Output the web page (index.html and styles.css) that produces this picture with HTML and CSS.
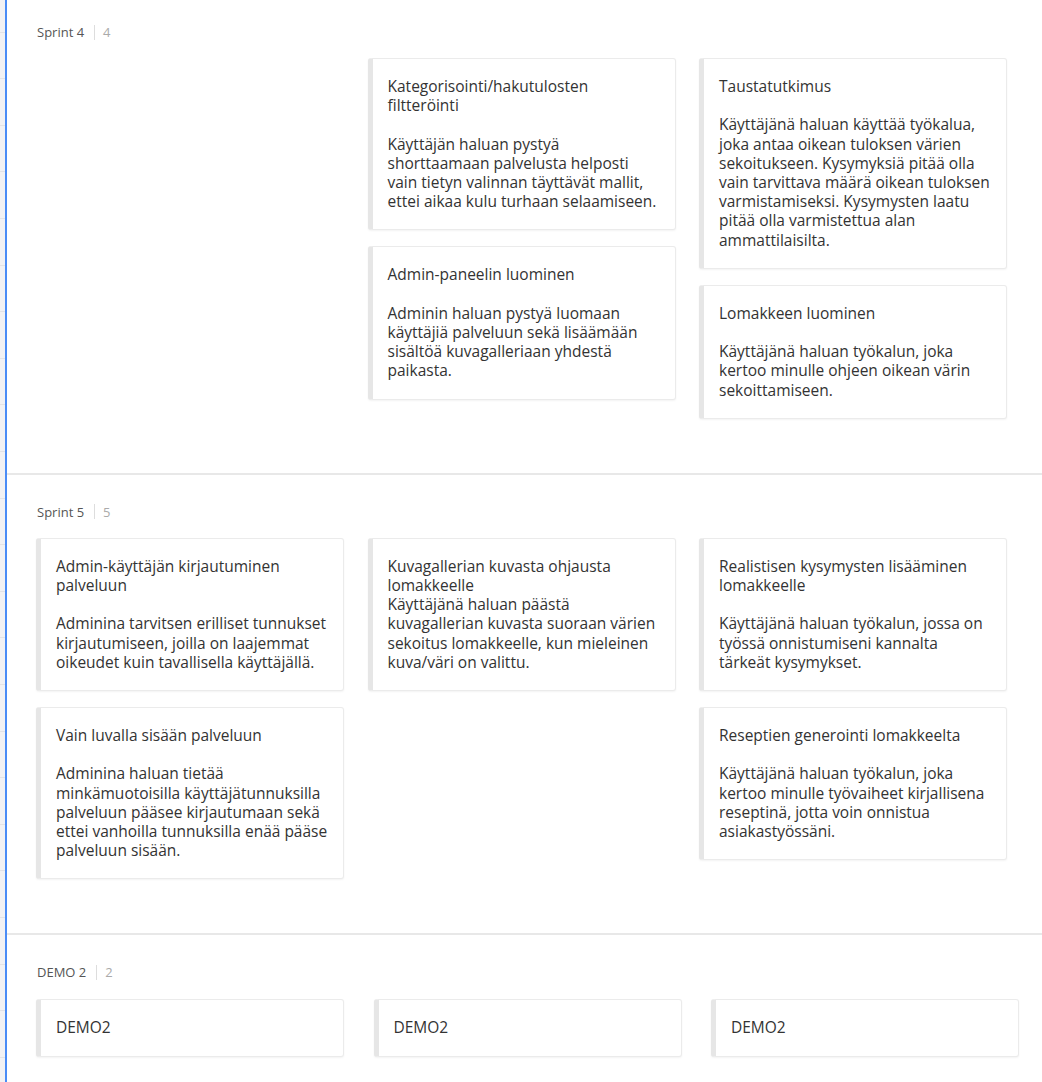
FILE: index.html
```html
<!DOCTYPE html>
<html lang="fi">
<head>
<meta charset="utf-8">
<title>Sprints</title>
<link rel="stylesheet" href="styles.css">
</head>
<body>
<div class="app">
  <div class="rail"></div>
  <main class="board">
    <section class="lane lane--first">
      <header class="lane-head"><span class="lane-name">Sprint 4</span><span class="lane-sep"></span><span class="lane-count">4</span></header>
      <div class="cols">
        <div class="col"></div>
        <div class="col">
          <div class="card">
            <p class="card-title">Kategorisointi/hakutulosten filtteröinti</p>
            <p class="card-desc">Käyttäjän haluan pystyä shorttaamaan palvelusta helposti vain tietyn valinnan täyttävät mallit, ettei aikaa kulu turhaan selaamiseen.</p>
          </div>
          <div class="card">
            <p class="card-title">Admin-paneelin luominen</p>
            <p class="card-desc">Adminin haluan pystyä luomaan käyttäjiä palveluun sekä lisäämään sisältöä kuvagalleriaan yhdestä paikasta.</p>
          </div>
        </div>
        <div class="col">
          <div class="card">
            <p class="card-title">Taustatutkimus</p>
            <p class="card-desc">Käyttäjänä haluan käyttää työkalua, joka antaa oikean tuloksen värien sekoitukseen. Kysymyksiä pitää olla vain tarvittava määrä oikean tuloksen varmistamiseksi. Kysymysten laatu pitää olla varmistettua alan ammattilaisilta.</p>
          </div>
          <div class="card">
            <p class="card-title">Lomakkeen luominen</p>
            <p class="card-desc">Käyttäjänä haluan työkalun, joka kertoo minulle ohjeen oikean värin sekoittamiseen.</p>
          </div>
        </div>
      </div>
    </section>

    <section class="lane">
      <header class="lane-head"><span class="lane-name">Sprint 5</span><span class="lane-sep"></span><span class="lane-count">5</span></header>
      <div class="cols">
        <div class="col">
          <div class="card">
            <p class="card-title">Admin-käyttäjän kirjautuminen palveluun</p>
            <p class="card-desc">Adminina tarvitsen erilliset tunnukset kirjautumiseen, joilla on laajemmat oikeudet kuin tavallisella käyttäjällä.</p>
          </div>
          <div class="card">
            <p class="card-title">Vain luvalla sisään palveluun</p>
            <p class="card-desc">Adminina haluan tietää minkämuotoisilla käyttäjätunnuksilla palveluun pääsee kirjautumaan sekä ettei vanhoilla tunnuksilla enää pääse palveluun sisään.</p>
          </div>
        </div>
        <div class="col">
          <div class="card">
            <p class="card-title">Kuvagallerian kuvasta ohjausta lomakkeelle</p>
            <p class="card-desc card-desc--tight">Käyttäjänä haluan päästä kuvagallerian kuvasta suoraan värien sekoitus lomakkeelle, kun mieleinen kuva/väri on valittu.</p>
          </div>
        </div>
        <div class="col">
          <div class="card">
            <p class="card-title">Realistisen kysymysten lisääminen lomakkeelle</p>
            <p class="card-desc">Käyttäjänä haluan työkalun, jossa on työssä onnistumiseni kannalta tärkeät kysymykset.</p>
          </div>
          <div class="card">
            <p class="card-title">Reseptien generointi lomakkeelta</p>
            <p class="card-desc">Käyttäjänä haluan työkalun, joka kertoo minulle työvaiheet kirjallisena reseptinä, jotta voin onnistua asiakastyössäni.</p>
          </div>
        </div>
      </div>
    </section>

    <section class="lane">
      <header class="lane-head"><span class="lane-name">DEMO 2</span><span class="lane-sep"></span><span class="lane-count">2</span></header>
      <div class="cols cols--wide">
        <div class="col"><div class="card"><p class="card-title">DEMO2</p></div></div>
        <div class="col"><div class="card"><p class="card-title">DEMO2</p></div></div>
        <div class="col"><div class="card"><p class="card-title">DEMO2</p></div></div>
      </div>
    </section>
  </main>
</div>
</body>
</html>
```

FILE: styles.css
```css
html, body {
  margin: 0;
  padding: 0;
  background: #ffffff;
}

body {
  font-family: "Open Sans", "Noto Sans", "Liberation Sans", sans-serif;
  color: #333333;
  overflow: hidden;
}

.app {
  display: flex;
  min-height: 1082px;
}

.rail {
  width: 5px;
  flex: 0 0 5px;
  background-color: #f2f2f4;
  background-image: repeating-linear-gradient(to bottom, transparent 0, transparent 45.6px, #e3e3e6 45.6px, #e3e3e6 46.6px);
  background-position: 0 -14px;
}

.board {
  flex: 1;
  border-left: 2px solid #4a8cf6;
}

.lane {
  padding: 25px 0 54px 29px;
  border-bottom: 2px solid #e8e8e8;
}

.lane--first {
  padding-top: 20px;
}

.lane:last-child {
  border-bottom: none;
}

.lane-head {
  display: flex;
  align-items: center;
  height: 24px;
  font-size: 13px;
  padding-left: 1px;
}

.lane-name {
  color: #555555;
}

.lane-sep {
  width: 1px;
  height: 15px;
  background: #dddddd;
  margin: 0 8px 0 10px;
}

.lane-count {
  color: #aaaaaa;
}

.cols {
  display: grid;
  grid-template-columns: repeat(3, 308px);
  column-gap: 23.5px;
  margin-top: 14px;
  align-items: start;
}

.cols--wide {
  column-gap: 29.5px;
  margin-top: 15px;
}

.col {
  display: flex;
  flex-direction: column;
  gap: 16px;
}

.card {
  background: #ffffff;
  border: 1px solid #ebebeb;
  border-left: 5px solid #e6e6e6;
  border-radius: 3px;
  box-shadow: 0 1px 2px rgba(0, 0, 0, 0.05);
  padding: 18px 14.5px 18px 15px;
  font-size: 15.5px;
  line-height: 19.2px;
  color: #333333;
}

.card-title,
.card-desc {
  margin: 0;
}

.card-desc {
  margin-top: 19.2px;
}

.card-desc--tight {
  margin-top: 0;
}
```
